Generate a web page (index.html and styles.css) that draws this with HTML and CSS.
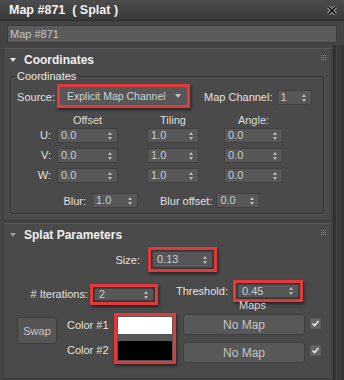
FILE: index.html
```html
<!DOCTYPE html>
<html lang="en">
<head>
    <meta charset="UTF-8">
    <title>Map #871 ( Splat )</title>
    <link rel="stylesheet" href="styles.css">
</head>
<body>
    <div class="window">
        <div class="titlebar">
            <span>Map #871&nbsp; ( Splat )</span>
            <svg class="close" width="10" height="9" viewBox="0 0 10 9">
                <path d="M1.5 1 L8.5 8 M8.5 1 L1.5 8" stroke="#ddd" stroke-width="3.2"/>
                <path d="M1.5 1 L8.5 8 M8.5 1 L1.5 8" stroke="#111" stroke-width="1.8"/>
            </svg>
        </div>
        <div class="name-row">
            <div class="name-field">Map #871</div>
        </div>

        <div class="main">
            <div class="panel">
                <!-- rollout: coordinates -->
                <div class="rollout">
                    <div class="rollout-head">
                        <span class="tri"></span>
                        <span class="rollout-title">Coordinates</span>
                        <svg class="grip" width="7" height="7" viewBox="0 0 7 7">
                            <path d="M1 1h1v1h-1zM3 1h1v1h-1zM5 1h1v1h-1zM1 3h1v1h-1zM3 3h1v1h-1zM5 3h1v1h-1zM1 5h1v1h-1zM3 5h1v1h-1zM5 5h1v1h-1z" fill="#8c8c8c"/>
                        </svg>
                    </div>
                    <fieldset class="group">
                        <legend>Coordinates</legend>
                        <div class="source-row">
                            <span class="lbl source-lbl">Source:</span>
                            <div class="hl hl-source">
                                <div class="dropdown">Explicit Map Channel<span class="dd-arrow"></span></div>
                            </div>
                            <span class="lbl mapch-lbl">Map Channel:</span>
                            <div class="spin spin-ch">1<span class="arrows"></span></div>
                        </div>
                        <div class="uvw-head">
                            <span></span>
                            <span class="col-head w61">Offset</span>
                            <span class="col-head w52">Tiling</span>
                            <span class="col-head w59">Angle:</span>
                        </div>
                        <div class="uvw">
                            <span class="lbl row-lbl">U:</span>
                            <div class="spin w61">0.0<span class="arrows"></span></div>
                            <div class="spin w52">1.0<span class="arrows"></span></div>
                            <div class="spin w59">0.0<span class="arrows"></span></div>

                            <span class="lbl row-lbl">V:</span>
                            <div class="spin w61">0.0<span class="arrows"></span></div>
                            <div class="spin w52">1.0<span class="arrows"></span></div>
                            <div class="spin w59">0.0<span class="arrows"></span></div>

                            <span class="lbl row-lbl">W:</span>
                            <div class="spin w61">0.0<span class="arrows"></span></div>
                            <div class="spin w52">1.0<span class="arrows"></span></div>
                            <div class="spin w59">0.0<span class="arrows"></span></div>
                        </div>
                        <div class="blur-row">
                            <span class="lbl blur-lbl">Blur:</span>
                            <div class="spin w46">1.0<span class="arrows"></span></div>
                            <span class="lbl bluroff-lbl">Blur offset:</span>
                            <div class="spin w44">0.0<span class="arrows"></span></div>
                        </div>
                    </fieldset>
                </div>

                <!-- rollout: splat parameters -->
                <div class="rollout">
                    <div class="rollout-head">
                        <span class="tri tri-dim"></span>
                        <span class="rollout-title">Splat Parameters</span>
                        <svg class="grip" width="7" height="7" viewBox="0 0 7 7">
                            <path d="M1 1h1v1h-1zM3 1h1v1h-1zM5 1h1v1h-1zM1 3h1v1h-1zM3 3h1v1h-1zM5 3h1v1h-1zM1 5h1v1h-1zM3 5h1v1h-1zM5 5h1v1h-1z" fill="#8c8c8c"/>
                        </svg>
                    </div>
                    <div class="size-row">
                        <span class="lbl size-lbl">Size:</span>
                        <div class="hl hl-size">
                            <div class="spin fill">0.13<span class="arrows"></span></div>
                        </div>
                    </div>
                    <div class="iter-row">
                        <span class="lbl iter-lbl">#&nbsp;Iterations:</span>
                        <div class="hl hl-iter">
                            <div class="spin fill">2<span class="arrows"></span></div>
                        </div>
                        <span class="lbl thr-lbl">Threshold:</span>
                        <div class="hl hl-thr">
                            <div class="spin fill">0.45<span class="arrows"></span></div>
                        </div>
                    </div>
                    <div class="maps-lbl">Maps</div>
                    <div class="color-block">
                        <button class="swap">Swap</button>
                        <div class="color-labels">
                            <span class="lbl">Color #1</span>
                            <span class="lbl">Color #2</span>
                        </div>
                        <div class="hl hl-swatch">
                            <div class="swatch white"></div>
                            <div class="swatch black"></div>
                        </div>
                        <div class="map-btns">
                            <button class="map-btn">No Map</button>
                            <button class="map-btn">No Map</button>
                        </div>
                        <div class="checks">
                            <span class="check"><svg width="11" height="11" viewBox="0 0 11 11"><path d="M2.5 5.5 L4.5 7.5 L8.5 3" stroke="#e8e8e8" stroke-width="1.6" fill="none"/></svg></span>
                            <span class="check"><svg width="11" height="11" viewBox="0 0 11 11"><path d="M2.5 5.5 L4.5 7.5 L8.5 3" stroke="#e8e8e8" stroke-width="1.6" fill="none"/></svg></span>
                        </div>
                    </div>
                </div>
            </div>
            <div class="scroll"><div class="scroll-thumb"></div></div>
        </div>
    </div>
</body>
</html>
```

FILE: styles.css
```css
*{
    box-sizing: border-box;
    margin: 0;
    padding: 0;
}

body{
    background: #444;
    font-family: "Liberation Sans", Arial, sans-serif;
    font-size: 11px;
    color: #dedede;
}

.window{
    width: 344px;
    height: 380px;
    overflow: hidden;
    background: #444;
}

.titlebar{
    height: 21px;
    display: flex;
    align-items: center;
    justify-content: space-between;
    padding: 0 7px 0 9px;
    background: linear-gradient(#4c4c4c, #393939);
    border-bottom: 1px solid #2e2e2e;
    color: #f2f2f2;
    font-weight: bold;
    font-size: 12.5px;
}
.close{
    display: block;
}

.name-row{
    padding: 4px 7px 0 7px;
    height: 24px;
}
.name-field{
    height: 18px;
    background: #5b5b5b;
    border: 1px solid #3a3a3a;
    color: #c6c6c6;
    padding-left: 2px;
    line-height: 16px;
}

.main{
    display: flex;
    height: 335px;
}
.panel{
    width: 333px;
    padding: 3px 1px 0 3px;
}
.scroll{
    width: 11px;
    background: #333;
    border-left: 1px solid #2a2a2a;
    padding: 0 2px;
}
.scroll-thumb{
    height: 100%;
    background: #3b3b3b;
    border-left: 1px solid #444;
}

/* rollouts */
.rollout{
    background: #4a4a4a;
    border: 1px solid #3a3a3a;
    border-top-color: #575757;
    border-radius: 2px;
    margin-bottom: 2px;
}
.rollout-head{
    height: 21px;
    display: flex;
    align-items: center;
    padding-left: 6px;
    padding-right: 4px;
}
.tri{
    width: 0;
    height: 0;
    border-left: 3px solid transparent;
    border-right: 3px solid transparent;
    border-top: 4px solid #eaeaea;
    margin-right: 8px;
}
.tri-dim{
    border-top-color: #9a9a9a;
}
.rollout-title{
    flex: 1;
    font-weight: bold;
    font-size: 12px;
    color: #f0f0f0;
}
.grip{
    display: block;
    margin-top: -4px;
}

/* group box */
.group{
    margin: 0 7px 6px 6px;
    border: 1px solid #2f2f2f;
    box-shadow: inset 1px 1px 0 #555, 1px 1px 0 #555;
    border-radius: 3px;
    padding: 0 0 5px 0;
}
.group legend{
    margin-left: 4px;
    padding: 0 2px;
    line-height: 13px;
    color: #e6e6e6;
}

.lbl{
    color: #e2e2e2;
    white-space: nowrap;
}

/* spinners */
.spin{
    position: relative;
    height: 15px;
    background: #575757;
    border: 1px solid #404040;
    border-radius: 2px;
    color: #c7cfd6;
    line-height: 13px;
    padding-left: 3px;
}
.arrows{
    position: absolute;
    right: 4px;
    top: 3px;
    width: 5px;
    height: 8px;
}
.arrows::before,
.arrows::after{
    content: "";
    position: absolute;
    left: 0;
    border-left: 2.5px solid transparent;
    border-right: 2.5px solid transparent;
}
.arrows::before{
    top: 0;
    border-bottom: 3px solid #bcbcbc;
}
.arrows::after{
    bottom: 0;
    border-top: 3px solid #bcbcbc;
}
.w61{ width: 61px; }
.w52{ width: 52px; }
.w59{ width: 59px; }
.w46{ width: 46px; }
.w44{ width: 44px; }

/* red highlight boxes */
.hl{
    border: 3px solid #e4393b;
    background: #363636;
    padding: 1px;
    box-shadow: 1px 2px 3px rgba(0, 0, 0, 0.55);
}
.spin.fill{
    width: 100%;
    height: 100%;
    display: flex;
    align-items: center;
    padding-left: 4px;
}
.spin.fill .arrows{
    top: 50%;
    margin-top: -4px;
}

.source-row{
    display: flex;
    align-items: center;
    height: 24px;
    margin-top: 1px;
}
.source-lbl{
    width: 44px;
    text-align: right;
    margin-right: 2px;
    margin-top: 1px;
}
.hl-source{
    width: 133px;
    height: 24px;
    padding: 0;
}
.dropdown{
    position: relative;
    height: 100%;
    background: #575757;
    color: #cbd2d8;
    font-size: 10.5px;
    line-height: 18px;
    padding-left: 7px;
}
.dd-arrow{
    position: absolute;
    right: 6px;
    top: 7px;
    border-left: 3px solid transparent;
    border-right: 3px solid transparent;
    border-top: 4px solid #c4c4c4;
}
.mapch-lbl{
    margin-left: 14px;
    margin-top: 1px;
}
.spin-ch{
    width: 35px;
    margin-left: 4px;
    margin-top: 2px;
}

.uvw-head,
.uvw{
    display: grid;
    grid-template-columns: 46px 90px 77px 59px;
}
.uvw-head{
    height: 14px;
    margin-top: 5px;
}
.uvw{
    grid-auto-rows: 15px;
    row-gap: 5px;
    margin-top: 1px;
}
.col-head{
    text-align: center;
    line-height: 14px;
}
.row-lbl{
    text-align: right;
    padding-right: 6px;
    line-height: 15px;
}

.blur-row{
    display: flex;
    align-items: center;
    margin-top: 10px;
    height: 15px;
}
.blur-lbl{
    width: 75px;
    text-align: right;
    margin-right: 6px;
}
.bluroff-lbl{
    margin-left: 22px;
    margin-right: 4px;
}

/* splat parameters */
.size-row{
    display: flex;
    align-items: center;
    height: 25px;
    margin-top: 2px;
}
.size-lbl{
    width: 136px;
    text-align: right;
    margin-right: 8px;
}
.hl-size{
    width: 69px;
    height: 25px;
}

.iter-row{
    display: flex;
    height: 25px;
    margin-top: 8px;
}
.iter-lbl{
    width: 84px;
    text-align: right;
    margin-right: 2px;
    align-self: flex-end;
    line-height: 21px;
}
.hl-iter{
    width: 68px;
    height: 21px;
    align-self: flex-end;
}
.thr-lbl{
    width: 57px;
    margin-left: 18px;
    line-height: 22px;
}
.hl-thr{
    width: 70px;
    height: 22px;
}

.maps-lbl{
    margin-top: -5px;
    margin-left: 235px;
    line-height: 11px;
    color: #d8d8d8;
}

.color-block{
    display: flex;
    margin-top: 2px;
    padding-left: 13px;
    padding-bottom: 14px;
}
.swap{
    width: 40px;
    height: 27px;
    margin-top: 4px;
    background: #555;
    border: 1px solid #3c3c3c;
    border-radius: 3px;
    color: #c8c8c8;
    font-family: inherit;
    font-size: 11px;
}
.color-labels{
    width: 47px;
    margin-left: 10px;
    padding-top: 6px;
    display: flex;
    flex-direction: column;
    gap: 12px;
    line-height: 13px;
}
.hl-swatch{
    width: 62px;
    height: 51px;
    background: #575757;
    padding: 1px;
    display: flex;
    flex-direction: column;
    justify-content: space-between;
}
.swatch{
    height: 17px;
}
.swatch.white{
    background: #fff;
}
.swatch.black{
    background: #000;
    height: 19px;
}
.map-btns{
    display: flex;
    flex-direction: column;
    gap: 7px;
    margin-left: 7px;
    margin-top: 1px;
}
.map-btn{
    width: 122px;
    height: 21px;
    background: #585858;
    border: 1px solid #3e3e3e;
    border-radius: 3px;
    color: #c4c4c4;
    font-family: inherit;
    font-size: 12px;
}
.checks{
    display: flex;
    flex-direction: column;
    gap: 16px;
    margin-left: 5px;
    margin-top: 5px;
}
.check{
    display: block;
    width: 11px;
    height: 11px;
    background: #666;
    border: 1px solid #5a5a5a;
}
.check svg{
    display: block;
    margin: -1px;
}
```
